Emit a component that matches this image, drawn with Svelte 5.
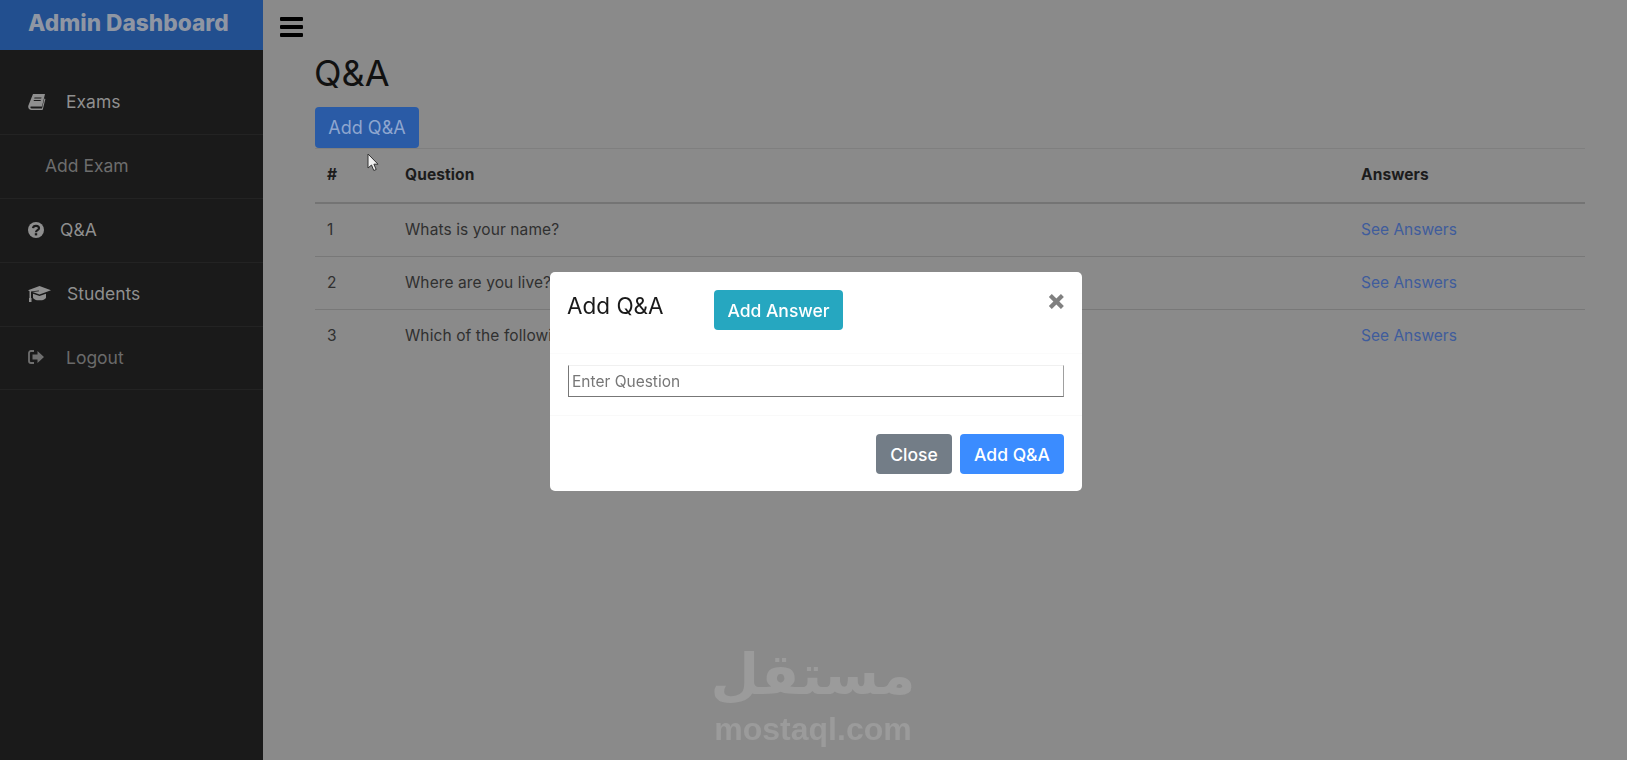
<script>
  const rows = [
    { id: 1, question: 'Whats is your name?' },
    { id: 2, question: 'Where are you live?' },
    { id: 3, question: 'Which of the following is correct?' },
  ];
</script>

<div class="layout">
  <aside class="sidebar">
    <div class="brand">Admin Dashboard</div>
    <nav class="nav">
      <a class="item">
        <svg class="icon" width="18" height="17" viewBox="0 0 18 17">
          <path fill="#8f8f8f" d="M5 1h12l-3 12.5H3.400c-.9 0-1.200.5-1 1 .2.6.7.9 1.400.9H14l2.400-10 1 .6-2.600 10.600c-.1.3-.3.4-.6.4H3.400C1.900 17 .6 15.900 .3 14.500 .1 13.800.2 13.200.4 12.600z"/>
          <path fill="#1a1a1a" d="M6.500 4.500h7l-.3 1h-7zM5.900 7h7l-.3 1h-7z"/>
        </svg>
        <span class="label exams">Exams</span>
      </a>
      <a class="item sub"><span class="label">Add Exam</span></a>
      <a class="item">
        <svg class="icon" width="16" height="16" viewBox="0 0 16 16">
          <circle cx="8" cy="8" r="8" fill="#8f8f8f"/>
          <path fill="none" stroke="#1a1a1a" stroke-width="2.200" d="M5 6.200C5.200 4.500 6.500 3.800 8 3.800c1.700 0 3 1 3 2.400 0 2-3 2-3 4"/>
          <rect x="6.800" y="11.200" width="2.400" height="2.200" fill="#1a1a1a"/>
        </svg>
        <span class="label qa">Q&amp;A</span>
      </a>
      <a class="item">
        <svg class="icon" width="23" height="16" viewBox="0 0 23 16">
          <path fill="#8f8f8f" d="M11.500 0 23 4.200 11.500 8.400 4.500 5.900 11 5.200l-.2-.8-7.800 1v7.200H1.500V5.200L0 4.200z"/>
          <path fill="#8f8f8f" d="M5 7.800l6.500 2.300 6.500-2.300v3.600c0 1.500-3 2.900-6.500 2.900S5 12.900 5 11.400z"/>
          <rect x="1" y="12" width="2.500" height="4" fill="#8f8f8f"/>
        </svg>
        <span class="label students">Students</span>
      </a>
      <a class="item dim">
        <svg class="icon" width="16" height="14" viewBox="0 0 16 14">
          <path fill="none" stroke="#6f6f6f" stroke-width="1.800" d="M6 1H3C1.800 1 1 1.800 1 3v8c0 1.200.8 2 2 2h3"/>
          <path fill="#6f6f6f" d="M4.500 4.500h5V1l6.500 6-6.500 6V9.500h-5z"/>
        </svg>
        <span class="label logout">Logout</span>
      </a>
    </nav>
  </aside>

  <main class="main">
    <div class="topbar">
      <span class="bars"><i></i><i></i><i></i></span>
    </div>
    <div class="content">
      <h1>Q&amp;A</h1>
      <button class="add">Add Q&amp;A</button>
      <table>
        <thead>
          <tr>
            <th class="num">#</th>
            <th>Question</th>
            <th class="answers">Answers</th>
          </tr>
        </thead>
        <tbody>
          {#each rows as row}
            <tr>
              <td>{row.id}</td>
              <td>{row.question}</td>
              <td><a class="link">See Answers</a></td>
            </tr>
          {/each}
        </tbody>
      </table>
    </div>
  </main>
</div>

<svg class="cursor" width="13" height="19" viewBox="0 0 13 19">
  <path fill="#f2f2f2" stroke="#333" stroke-width="1" d="M1 1v14l3.500-3 2.300 5.500 2.400-1-2.300-5.300H11z"/>
</svg>

<div class="watermark">
  <div class="mark">مستقل</div>
  <div class="site">mostaql.com</div>
</div>

<div class="backdrop">
  <div class="modal">
    <header class="modal-head">
      <h5>Add Q&amp;A</h5>
      <button class="btn info">Add Answer</button>
      <span class="close">×</span>
    </header>
    <div class="modal-body">
      <input type="text" placeholder="Enter Question" />
    </div>
    <footer class="modal-foot">
      <button class="btn grey">Close</button>
      <button class="btn blue">Add Q&amp;A</button>
    </footer>
  </div>
</div>

<style>
  :global(body) {
    margin: 0;
    background: #8a8a8a;
    font-family: Inter, "Open Sans", sans-serif;
    overflow: hidden;
  }

  .layout {
    display: flex;
    height: 760px;
  }

  .sidebar {
    width: 263px;
    flex: none;
    background: #1a1a1a;
  }

  .brand {
    height: 50px;
    box-sizing: border-box;
    padding: 10px 0 0 28px;
    background: #224f8f;
    color: #8f96a3;
    font-size: 22.700px;
    font-weight: 800;
    line-height: 26px;
    white-space: nowrap;
  }

  .nav {
    display: flex;
    flex-direction: column;
    padding-top: 21px;
  }

  .item {
    display: flex;
    align-items: center;
    height: 64px;
    box-sizing: border-box;
    padding: 0 0 2px 28px;
    border-bottom: 1px solid #232323;
    color: #8f8f8f;
    font-size: 17.500px;
  }

  .item:last-child {
    height: 63px;
  }

  .item.sub {
    padding-left: 45px;
    color: #6d6d6d;
  }

  .item.dim {
    color: #6a6a6a;
  }

  .exams { margin-left: 20px; }
  .qa { margin-left: 16px; }
  .students { margin-left: 16px; }
  .logout { margin-left: 22px; }

  .main {
    flex: 1;
    min-width: 0;
    padding: 0 42px 0 17px;
  }

  .topbar {
    height: 50px;
    display: flex;
    align-items: center;
    padding-top: 6px;
    box-sizing: border-box;
  }

  .bars {
    display: flex;
    flex-direction: column;
    gap: 4px;
    width: 23px;
    margin-top: -2px;
  }

  .bars i {
    display: block;
    height: 4px;
    background: #000;
    border-radius: 1px;
  }

  .content {
    padding-left: 35px;
  }

  h1 {
    margin: 1px 0 0 -1px;
    font-size: 36px;
    font-weight: 400;
    line-height: 44px;
    color: #111;
  }

  .add {
    display: block;
    width: 104px;
    height: 41px;
    margin-top: 12px;
    padding: 0;
    border: 0;
    border-radius: 4px;
    background: #2a5ba6;
    color: #8ea6cf;
    font: 400 18px Inter, sans-serif;
  }

  table {
    width: 100%;
    border-collapse: collapse;
    table-layout: fixed;
    color: #2b2b2b;
    font-size: 15.500px;
    letter-spacing: .1px;
  }

  th, td {
    padding: 0 0 0 12px;
    text-align: left;
  }

  th {
    height: 51px;
    padding-bottom: 2px;
    border-top: 1px solid #7f7f7f;
    border-bottom: 2px solid #747474;
    color: #1c1c1c;
    font-weight: 700;
    font-size: 15.500px;
  }

  th.num { width: 66px; }
  th.answers { width: 224px; }

  td {
    height: 53px;
    padding-bottom: 1px;
    box-sizing: border-box;
    border-bottom: 1px solid #787878;
    color: #303030;
    white-space: nowrap;
    overflow: hidden;
  }

  tbody tr:last-child td {
    border-bottom: 0;
  }

  .link {
    color: #3f5c9c;
    letter-spacing: 0;
  }

  .cursor {
    position: fixed;
    left: 367px;
    top: 153px;
  }

  .watermark {
    position: fixed;
    left: 708px;
    top: 639px;
    width: 210px;
    text-align: center;
    color: #9b9b9b;
  }

  .mark {
    font: 700 56px/72px "DejaVu Sans", sans-serif;
  }

  .site {
    font: 700 32px/36px "Liberation Sans", sans-serif;
  }

  .backdrop {
    position: fixed;
    inset: 0;
  }

  .modal {
    position: absolute;
    left: 550px;
    top: 272px;
    width: 532px;
    height: 219px;
    background: #fff;
    border-radius: 5px;
  }

  .modal-head {
    position: relative;
    display: flex;
    align-items: flex-start;
    height: 82px;
    box-sizing: border-box;
    padding: 17px 18px 0;
    border-bottom: 1px solid #fbfbfb;
  }

  h5 {
    width: 146px;
    margin: 0 0 0 -1px;
    padding-right: 1px;
    font-size: 22.500px;
    font-weight: 400;
    line-height: 34px;
    color: #1a1a1a;
  }

  .close {
    position: absolute;
    right: 16px;
    top: 12px;
    color: #808080;
    font-size: 28px;
    font-weight: 800;
    line-height: 32px;
  }

  .btn {
    height: 40px;
    padding: 0;
    border: 0;
    border-radius: 4px;
    color: #fff;
    font: 500 17.500px Inter, sans-serif;
  }

  .info {
    width: 129px;
    margin-top: 1px;
    background: #26a7c0;
  }

  .grey {
    width: 76px;
    background: #737d87;
  }

  .blue {
    width: 104px;
    background: #3b8cff;
  }

  .modal-body {
    height: 62px;
    box-sizing: border-box;
    padding: 11px 18px 0;
    border-bottom: 1px solid #f9f9f9;
  }

  input {
    display: block;
    width: 100%;
    height: 32px;
    box-sizing: border-box;
    padding: 0 3px;
    border-style: solid;
    border-width: 1px;
    border-color: #f0f0f0 #a0a0a0 #777 #777;
    font: 400 15.500px Inter, sans-serif;
  }

  input::placeholder {
    color: #777;
  }

  .modal-foot {
    display: flex;
    justify-content: flex-end;
    gap: 8px;
    padding: 18px;
  }
</style>
